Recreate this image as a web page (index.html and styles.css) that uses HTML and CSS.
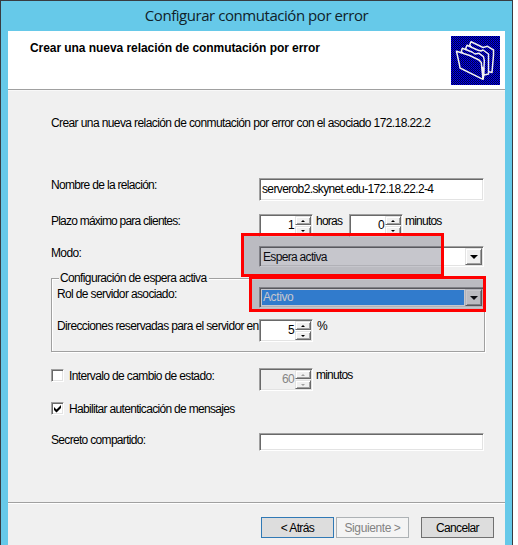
FILE: index.html
```html
<!DOCTYPE html>
<html lang="es">
<head>
<meta charset="utf-8">
<title>Configurar conmutación por error</title>
<link rel="stylesheet" href="styles.css">
</head>
<body>
<div class="window">
  <div class="titlebar"><span>Configurar conmutación por error</span></div>
  <div class="client">
    <header class="header">
      <h1>Crear una nueva relación de conmutación por error</h1>
      <svg class="folders" viewBox="0 0 49 49" width="49" height="49">
        <defs><pattern id="dither" width="2" height="2" patternUnits="userSpaceOnUse">
          <rect width="2" height="2" fill="#00004a"/><rect width="1" height="1" fill="#0000ff"/><rect x="1" y="1" width="1" height="1" fill="#0000c8"/>
        </pattern></defs>
        <rect width="49" height="49" fill="url(#dither)" shape-rendering="crispEdges"/>
        <g fill="url(#dither)" stroke="#f0f0f0" stroke-width="1.5" stroke-linejoin="round">
          <path d="M18.700 9L20 5.700L29 10L32 11.500L36.500 10.300L42.500 14V19L41 36.500L37 35.500Z"/>
          <path d="M14.700 12.500L16 9.300L26.500 14L30 15L32 14L37.500 18V22L37.500 38L33 39Z"/>
          <path d="M10.300 15.500L11.300 12.300L21 16L24 18L28 17.300L32.500 20.700L33.300 24.700L32.500 41L29 40Z"/>
          <path d="M5.500 15.300L18.700 19.500L28 24L30.300 26.500L32 43.300L9 32L8.500 29Z"/>
        </g>
        <path d="M30.500 30L33.500 32L33 43.500L31.500 43Z" fill="#f4f4f4"/>
      </svg>
    </header>
    <main class="form">
      <p class="intro">Crear una nueva relación de conmutación por error con el asociado 172.18.22.2</p>
      <div class="row name">
        <label class="snug">Nombre de la relación:</label>
        <div class="sunken field">serverob2.skynet.edu-172.18.22.2-4</div>
      </div>
      <div class="row term">
        <label class="tight">Plazo máximo para clientes:</label>
        <div class="sunken spin"><span>1</span><div class="arrows"><i class="up"></i><i class="down"></i></div></div>
        <span class="unit hours">horas</span>
        <div class="sunken spin"><span>0</span><div class="arrows"><i class="up"></i><i class="down"></i></div></div>
        <span class="unit minutes">minutos</span>
      </div>
      <div class="row mode">
        <label>Modo:</label>
        <div class="sunken combo"><span class="snug">Espera activa</span><i class="drop"></i></div>
      </div>
      <fieldset>
        <legend>Configuración de espera activa</legend>
        <div class="row role">
          <label>Rol de servidor asociado:</label>
          <div class="sunken combo"><span class="selected">Activo</span><i class="drop"></i></div>
        </div>
        <div class="row reserve">
          <label>Direcciones reservadas para el servidor en</label>
          <div class="sunken spin"><span>5</span><div class="arrows"><i class="up"></i><i class="down"></i></div></div>
          <span class="unit percent">%</span>
        </div>
      </fieldset>
      <div class="row interval">
        <label class="check"><i class="sunken box"></i><span>Intervalo de cambio de estado:</span></label>
        <div class="sunken spin disabled"><span>60</span><div class="arrows"><i class="up"></i><i class="down"></i></div></div>
        <span class="unit">minutos</span>
      </div>
      <div class="row auth">
        <label class="check"><i class="sunken box"><svg width="9" height="9" viewBox="0 0 9 9"><path d="M1 3L3.500 5.500L8 1V4L3.500 8.500L1 6Z"/></svg></i><span class="snug">Habilitar autenticación de mensajes</span></label>
      </div>
      <div class="row secret">
        <label class="snug">Secreto compartido:</label>
        <div class="sunken field"></div>
      </div>
    </main>
    <footer class="footer">
      <button class="default">&lt; Atrás</button>
      <button class="off" disabled>Siguiente &gt;</button>
      <button class="cancel">Cancelar</button>
    </footer>
  </div>
  <div class="mark mark-mode"></div>
  <div class="mark mark-role"></div>
</div>
</body>
</html>
```

FILE: styles.css
```css
* { box-sizing: border-box; }
body { margin: 0; background: #fff; overflow: hidden; font: 12px/14px "Liberation Sans", Arial, sans-serif; letter-spacing: -0.63px; color: #000; }
p, h1 { margin: 0; }
.window { position: relative; width: 513px; height: 545px; border: 1px solid #383c42; border-bottom: 0; background: #66c9e9; }
.titlebar { height: 30px; padding-top: 3px; text-align: center; font: 15px/22px "Open Sans", sans-serif; letter-spacing: -0.45px; color: #10222a; }
.client { display: flex; flex-direction: column; width: 497px; height: 514px; margin-left: 7px; background: #f0f0f0; white-space: nowrap; }
.header { display: flex; justify-content: space-between; height: 60px; padding: 5px 5px 0 22px; background: #fff; border-bottom: 1px solid #f8f8f8; box-shadow: inset 0 -1px #a0a0a0; }
h1 { padding-top: 5px; font: bold 12px/14px "Liberation Sans", sans-serif; letter-spacing: -0.06px; }
.form { height: 411px; padding: 25px 20px 0 43px; }
.row { display: flex; align-items: flex-start; height: 23px; }
.row > label { flex: 0 0 208px; min-width: 0; }
.snug { letter-spacing: -0.68px; }
.tight, .unit { letter-spacing: -0.78px; }
.intro { height: 14px; margin-bottom: 48px; letter-spacing: -0.6px; }
.name { margin-bottom: 13px; }
.term { margin-bottom: 9px; }
.mode { height: 21px; margin-bottom: 4px; }
.sunken { border: 1px solid; border-color: #a0a0a0 #fff #fff #a0a0a0; box-shadow: inset 1px 1px #696969, inset -1px -1px #e3e3e3; background: #fff; }
.field { width: 225px; height: 23px; padding: 3px 2px; }
.spin { display: flex; width: 54px; height: 23px; padding: 1px; }
.spin > span { flex: 1; padding: 2px 1px 0 0; text-align: right; }
.arrows { width: 16px; display: flex; flex-direction: column; gap: 1px; }
.arrows i { display: flex; align-items: center; justify-content: center; height: 9px; border: 1px solid; border-color: #e3e3e3 #696969 #696969 #e3e3e3; box-shadow: inset 1px 1px #fff, inset -1px -1px #a0a0a0; background: #f0f0f0; }
.arrows i::before { content: ""; border: solid transparent; border-width: 0 2px; }
.arrows .up::before { border-bottom: 2px solid #000; }
.arrows .down::before { border-top: 2px solid #000; }
.unit { padding-left: 3px; }
.hours { width: 36px; }
.minutes { padding-left: 2px; }
.percent { padding-left: 4px; }
.disabled { background: #f0f0f0; color: #858585; }
.disabled .arrows .up::before { border-bottom-color: #a0a0a0; }
.disabled .arrows .down::before { border-top-color: #a0a0a0; }
.combo { display: flex; width: 225px; height: 21px; padding: 1px; }
.combo span { flex: 1; margin: 1px; padding-left: 1px; line-height: 16px; }
.combo .selected { background: #3399ff; color: #fff; line-height: 15px; letter-spacing: -0.4px; }
.drop { display: flex; align-items: center; justify-content: center; width: 17px; height: 17px; border: 1px solid; border-color: #e3e3e3 #696969 #696969 #e3e3e3; box-shadow: inset 1px 1px #fff, inset -1px -1px #a0a0a0; background: #f0f0f0; }
.drop::before { content: ""; border: solid transparent; border-width: 4px 4px 0; border-top-color: #000; }
fieldset { min-width: 0; width: 434px; height: 81px; margin: 0 0 16px; padding: 2px 0 0 5px; border: 1px solid #a0a0a0; box-shadow: 1px 1px #fff, inset 1px 1px #fff; }
legend { height: 14px; margin-left: 2px; padding: 0 2px 0 1px; background: #f0f0f0; }
fieldset .row > label { flex-basis: 202px; }
.role { height: 21px; margin-bottom: 11px; }
.interval { margin-bottom: 11px; }
.auth { height: 13px; margin-bottom: 18px; }
.check { display: flex; }
.box { display: block; flex: none; width: 13px; height: 13px; margin-right: 5px; padding: 1px; }
.box svg { display: block; }
.interval .check { padding-top: 1px; }
.secret .field { height: 18px; }
.footer { display: flex; height: 43px; padding: 14px 11px 0 253px; border-top: 1px solid #a0a0a0; box-shadow: inset 0 1px #fff; }
button { width: 73px; height: 21px; padding: 0; border: 1px solid #707070; background: #ddd; color: #000; font: inherit; letter-spacing: inherit; }
.default { border-color: #3079b5; margin-right: 2px; }
.off { border-color: #adb2b5; background: #f4f4f4; color: #838383; margin-right: 12px; letter-spacing: -0.4px; }
.mark { position: absolute; border: 3px solid #f00; background: rgba(45, 45, 65, .27); }
.mark-mode { left: 240px; top: 232px; width: 203px; height: 44px; }
.mark-role { left: 248px; top: 275px; width: 237px; height: 36px; }
```
